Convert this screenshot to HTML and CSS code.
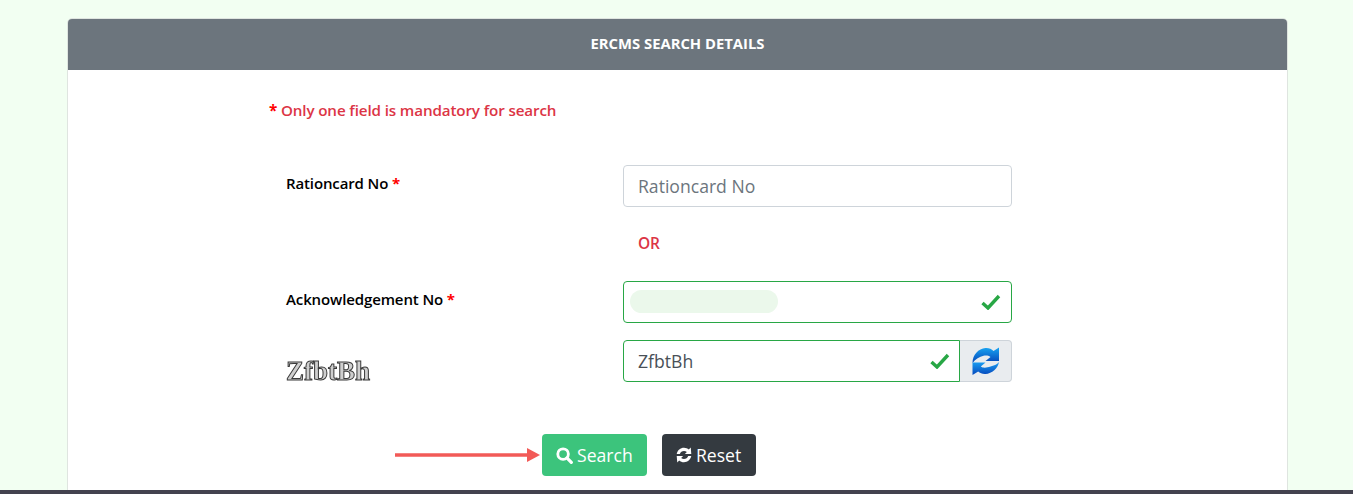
FILE: index.html
```html
<!DOCTYPE html>
<html lang="en">
<head>
<meta charset="utf-8">
<title>ERCMS Search Details</title>
<link rel="stylesheet" href="styles.css">
</head>
<body>
<main class="page">
  <section class="card">
    <header class="card-head">ERCMS SEARCH DETAILS</header>
    <form class="card-body">
      <p class="note"><span class="star">*</span> Only one field is mandatory for search</p>
      <div class="row row-first">
        <label class="label" for="rc">Rationcard No <span class="star">*</span></label>
        <input class="field" id="rc" type="text" placeholder="Rationcard No">
      </div>
      <div class="row row-or">
        <span></span>
        <span class="or">OR</span>
      </div>
      <div class="row">
        <label class="label" for="ack">Acknowledgement No <span class="star">*</span></label>
        <div class="box valid">
          <span class="blur"></span>
          <svg class="check" viewBox="0 0 20 16" aria-hidden="true"><path d="M1.5 9 L7 14 L18 2" fill="none" stroke="#28a745" stroke-width="3.4"/></svg>
        </div>
      </div>
      <div class="row row-captcha">
        <span class="captcha">ZfbtBh</span>
        <div class="group">
          <div class="box valid joined">
            <span class="value">ZfbtBh</span>
            <svg class="check" viewBox="0 0 20 16" aria-hidden="true"><path d="M1.5 9 L7 14 L18 2" fill="none" stroke="#28a745" stroke-width="3.4"/></svg>
          </div>
          <button class="refresh" type="button" aria-label="Refresh">
            <svg viewBox="0 0 30 30" width="30" height="30" aria-hidden="true">
              <defs>
                <linearGradient id="blueA" x1="0" y1="0" x2="0" y2="1"><stop offset="0" stop-color="#18a4f2"/><stop offset="1" stop-color="#0645b8"/></linearGradient>
                <linearGradient id="blueB" x1="0" y1="1" x2="0" y2="0"><stop offset="0" stop-color="#0648bc"/><stop offset="1" stop-color="#1a9ef2"/></linearGradient>
              </defs>
              <path d="M1.5 17 C1.5 9 7.5 2.5 14.5 2 C18 1.8 20.5 3 22.5 5 L28 1.5 L28 15 L14.5 15 L19.5 11 C17.5 9.5 15 9.2 12.5 9.8 C8.5 10.8 4.5 13 1.5 17 Z" fill="url(#blueA)"/>
              <path d="M28 16 C27 22.5 21 27.6 14.5 28 C11.5 28.2 9 27.2 7.2 25.5 L1.5 29 L1.5 16.5 L14.5 16.5 L9.8 20.5 C11.5 21.8 14 22 16.5 21.3 C20.5 20.3 25 19.5 28 16 Z" fill="url(#blueB)"/>
            </svg>
          </button>
        </div>
      </div>
      <div class="actions">
        <svg class="arrow" viewBox="0 0 145 14" aria-hidden="true"><path d="M0 7 H132" stroke="#f25a57" stroke-width="3.4"/><path d="M132 0 L145 7 L132 14 Z" fill="#f25a57"/></svg>
        <button class="btn btn-search" type="button">
          <svg viewBox="0 0 18 18" width="17" height="17" aria-hidden="true"><circle cx="7.5" cy="7.5" r="5.6" fill="none" stroke="#fff" stroke-width="3"/><path d="M11.6 11.6 L16.2 16.2" stroke="#fff" stroke-width="3.4" stroke-linecap="round"/></svg>
          Search
        </button>
        <button class="btn btn-reset" type="button">
          <svg viewBox="0 0 18 18" width="16" height="16" aria-hidden="true">
            <path d="M0.8 7.8 C1.6 3.6 5 0.8 9 0.8 C11.1 0.8 13 1.6 14.4 2.8 L16.6 0.6 L17.2 8 L10 8 L12.2 5.6 C11.3 4.8 10.2 4.4 9 4.4 C6.8 4.4 5 5.8 4.3 7.8 Z" fill="#fff"/>
            <path d="M17.2 10.2 C16.4 14.4 13 17.2 9 17.2 C6.9 17.2 5 16.4 3.6 15.2 L1.4 17.4 L0.8 10 L8 10 L5.8 12.4 C6.7 13.2 7.8 13.6 9 13.6 C11.2 13.6 13 12.2 13.7 10.2 Z" fill="#fff"/>
          </svg>
          Reset
        </button>
      </div>
    </form>
  </section>
</main>
<footer class="bar"></footer>
</body>
</html>
```

FILE: styles.css
```css
* { box-sizing: border-box; }

html, body { height: 100%; margin: 0; }

body {
  display: flex;
  flex-direction: column;
  overflow: hidden;
  background: #f2fff2;
  font-family: "Open Sans", "Liberation Sans", sans-serif;
  color: #000;
}

.page {
  flex: 1;
  min-height: 0;
  overflow: hidden;
  padding: 18px 65px 0 67px;
}

.card {
  height: 520px;
  background: #fff;
  border: 1px solid #dfe5e0;
  border-radius: 5px;
  overflow: hidden;
}

.card-head {
  height: 51px;
  background: #6c757d;
  color: #fff;
  font-size: 14.8px;
  font-weight: 700;
  line-height: 49px;
  text-align: center;
}

.card-body { padding: 30px 0 0 201px; }

.note {
  margin: 0;
  font-size: 15.2px;
  font-weight: 600;
  letter-spacing: -0.13px;
  line-height: 20px;
  color: #dc3545;
}

.star { color: #f00; font-weight: 700; }

.row {
  display: grid;
  grid-template-columns: 337px 389px;
  padding-left: 17px;
}

.row-first { margin-top: 45px; }

.row-or { height: 74px; align-items: center; }

.row-captcha { margin-top: 17px; }

.label {
  padding-top: 8px;
  font-size: 15px;
  font-weight: 600;
  letter-spacing: -0.12px;
  line-height: 20px;
}

.field, .box {
  width: 100%;
  height: 42px;
  border: 1px solid #ced4da;
  border-radius: 4px;
  background: #fff;
  font: 400 17.6px/24px "Open Sans", "Liberation Sans", sans-serif;
  color: #495057;
}

.field { padding: 0 14px 1px; outline: 0; }

.field::placeholder { color: #6c757d; opacity: 1; }

.box {
  display: flex;
  align-items: center;
  justify-content: space-between;
  padding: 0 10px 0 6px;
}

.valid { border-color: #28a745; }

.joined {
  flex: 1;
  padding: 0 9px 0 14px;
  border-radius: 4px 0 0 4px;
}

.blur {
  width: 148px;
  height: 23px;
  margin-top: -2px;
  border-radius: 12px;
  background: #ebf8eb;
}

.check { width: 20px; height: 16px; margin-top: -1px; }

.group { display: flex; }

.refresh {
  width: 52px;
  height: 42px;
  padding: 0;
  display: flex;
  align-items: center;
  justify-content: center;
  background: #e9ecef;
  border: 1px solid #ced4da;
  border-left: 0;
  border-radius: 0 4px 4px 0;
}

.captcha {
  align-self: end;
  height: 32px;
  font: 700 27px/42px "Liberation Serif", serif;
  color: #cfcfcf;
  -webkit-text-stroke: 1px #3a3a3a;
  will-change: transform;
}

.actions {
  position: relative;
  display: flex;
  gap: 15px;
  margin-top: 52px;
  padding-left: 273px;
}

.arrow {
  position: absolute;
  left: 126px;
  top: 14px;
  width: 145px;
  height: 14px;
}

.btn {
  display: inline-flex;
  align-items: center;
  gap: 4px;
  height: 42px;
  border: 0;
  border-radius: 4px;
  color: #fff;
  font: 400 17.6px/26px "Open Sans", "Liberation Sans", sans-serif;
}

.btn-search { width: 105px; padding: 0 0 0 14px; background: #3cc47c; }

.btn-reset { width: 94px; padding: 0 0 0 14px; background: #343a40; }

.or {
  margin-top: -2px;
  padding-left: 15px;
  font-size: 15.5px;
  font-weight: 600;
  letter-spacing: -0.1px;
  color: #dc3545;
}

.bar {
  flex: none;
  height: 4px;
  background: #43424f;
}
```
